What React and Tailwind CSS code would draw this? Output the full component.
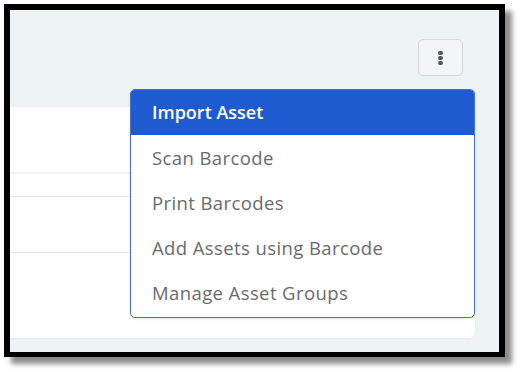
export default function App() {
  const items = ['Scan Barcode', 'Print Barcodes', 'Add Assets using Barcode', 'Manage Asset Groups'];

  return (
    <div className="w-[518px] h-[371px] bg-white pt-[4px] pl-[4px]" style={{fontFamily: '"Open Sans", Lato, sans-serif'}}>
      <div className="relative w-[501px] h-[353px] border-[6px] border-b-[5px] border-black bg-[#eef3f6] shadow-[7px_7px_5px_rgba(0,0,0,0.45)] overflow-hidden">
        <div className="flex flex-col pt-[29px]">
          <div className="flex justify-end pr-[36px]">
            <button className="flex flex-col items-center justify-center gap-[1px] w-[45px] h-[37px] rounded-[5px] border border-[#d6d9dc] bg-[#f3f6f8]">
              <span className="w-[5px] h-[4px] rounded-[2px] bg-[#555]"></span>
              <span className="w-[5px] h-[4px] rounded-[2px] bg-[#555]"></span>
              <span className="w-[5px] h-[4px] rounded-[2px] bg-[#555]"></span>
            </button>
          </div>

          {/* card behind the menu */}
          <div className="mt-[31px] ml-[-8px] mr-[24px] h-[231px] bg-white rounded-[6px] shadow-[0_1px_2px_rgba(0,0,0,0.05)]">
            <div className="h-[67px] border-b-2 border-[#eef2f5]"></div>
            <div className="h-[23px] border-b border-[#e2e4e7]"></div>
            <div className="h-[56px] border-b border-[#e2e4e7]"></div>
          </div>
        </div>

        {/* dropdown menu */}
        <div className="absolute left-[120px] top-[79px] w-[345px] h-[229px] bg-white border border-[#4d6fc4] rounded-[5px] overflow-hidden shadow-[0_1px_3px_rgba(0,0,0,0.1)]">
          <div className="h-[45px] flex items-center pl-[21px] bg-[#1f5bd0] text-white text-[18px] font-semibold">
            Import Asset
          </div>
          {items.map(item =>
            <div key={item} className="h-[45px] flex items-center pl-[21px] text-[#6b6b6b] text-[18.5px] tracking-[0.4px]">
              {item}
            </div>
          )}
        </div>
      </div>
    </div>
  );
}
